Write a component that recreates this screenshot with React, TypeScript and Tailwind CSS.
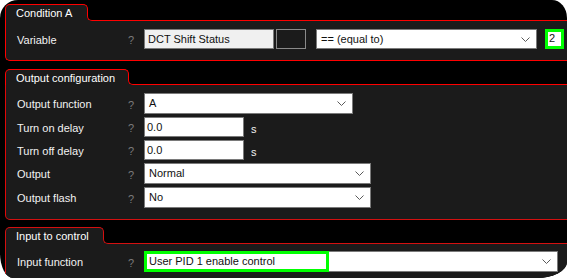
import React from "react";

function Chevron() {
  return (
    <svg width="9" height="5" viewBox="0 0 9 5" className="shrink-0">
      <path d="M0.5 0.5 L4.5 4.5 L8.5 0.5" fill="none" stroke="#5a5a5a" strokeWidth="1" />
    </svg>
  );
}

function Select({ value, w, h = "h-[21px]" }: { value: string; w: string; h?: string }) {
  return (
    <div className={`${w} ${h} shrink-0 bg-white border border-[#7a7a7a] flex items-center justify-between pl-[4px] pr-[6px] text-[11px] text-[#111111]`}>
      <span className="leading-none">{value}</span>
      <Chevron />
    </div>
  );
}

function TextBox({ value, w }: { value: string; w: string }) {
  return (
    <div className={`${w} h-[20px] shrink-0 bg-white border border-[#7a7a7a] flex items-center pl-[2px] text-[11px] text-[#111111]`}>
      <span className="leading-none">{value}</span>
    </div>
  );
}

function Label({ text }: { text: string }) {
  return (
    <>
      <div className="w-[111px] shrink-0 text-[11px] text-[#f2f2f2] leading-none pt-[2px]">{text}</div>
      <div className="w-[16px] shrink-0 text-[11px] text-[#7c7c7c] leading-none pt-[3px]">?</div>
    </>
  );
}

function Tab({ title, w, h, color }: { title: string; w: string; h: string; color: string }) {
  return (
    <div
      className={`relative z-10 ${w} ${h} -mb-px border-t border-l border-r ${color} rounded-t-[5px] bg-[#1b1b1b] flex items-center pl-[10px] pt-[1px] text-[11px] text-white leading-none`}
    >
      <span>{title}</span>
      <div className="absolute bottom-0 right-[-8px] w-[8px] h-[6px] bg-[#1b1b1b]">
        <div className={`w-full h-full bg-black border-l border-b ${color} rounded-bl-[5px]`} />
      </div>
    </div>
  );
}

export default function App() {
  return (
    <div className="w-[567px] h-[278px] bg-white">
      <div
        className="w-[567px] h-[278px] bg-black overflow-hidden pl-[5px] pt-[4px] rounded-tl-[18px] rounded-tr-[15px_18px] rounded-br-[30px_16px] rounded-bl-[13px_25px]"
        style={{ fontFamily: '"Liberation Sans", Arial, sans-serif' }}
      >
        {/* Condition A */}
        <Tab title="Condition A" w="w-[83px]" h="h-[17px]" color="border-[#ff0000]" />
        <div className="h-[41px] border-t border-l border-b border-[#ff0000] rounded-bl-[5px] bg-[#1b1b1b] pl-[11px] pt-[8px]">
          <div className="flex items-center">
            <Label text="Variable" />
            <div className="w-[130px] h-[20px] shrink-0 bg-[#f0f0f0] border border-[#7a7a7a] flex items-center pl-[3px] text-[11px] text-[#111111]">
              <span className="leading-none">DCT Shift Status</span>
            </div>
            <div className="ml-[2px] w-[30px] h-[20px] shrink-0 bg-[#1b1b1b] border border-[#8a8a8a]" />
            <div className="ml-[10px]">
              <Select value="== (equal to)" w="w-[221px]" h="h-[20px]" />
            </div>
            <div className="ml-[8px] -mt-[1px] w-[19px] h-[20px] shrink-0 bg-white border-[3px] border-[#00ff00] flex items-center pl-[1px] text-[11px] text-[#111111]">
              <span className="leading-none">2</span>
            </div>
          </div>
        </div>

        {/* Output configuration */}
        <div className="mt-[8px]">
          <Tab title="Output configuration" w="w-[124px]" h="h-[16px]" color="border-[#ff0000]" />
          <div className="h-[136px] border-t border-l border-b border-t-[#ff0000] border-l-[#e00808] border-b-[#d41010] rounded-bl-[5px] bg-[#1b1b1b] pl-[11px] pt-[8px] flex flex-col gap-[3px]">
            <div className="flex items-center">
              <Label text="Output function" />
              <Select value="A" w="w-[209px]" />
            </div>
            <div className="flex items-center">
              <Label text="Turn on delay" />
              <TextBox value="0.0" w="w-[100px]" />
              <span className="ml-[7px] text-[11px] text-[#f2f2f2] leading-none pt-[4px]">s</span>
            </div>
            <div className="flex items-center">
              <Label text="Turn off delay" />
              <TextBox value="0.0" w="w-[100px]" />
              <span className="ml-[7px] text-[11px] text-[#f2f2f2] leading-none pt-[4px]">s</span>
            </div>
            <div className="flex items-center">
              <Label text="Output" />
              <Select value="Normal" w="w-[227px]" />
            </div>
            <div className="flex items-center">
              <Label text="Output flash" />
              <Select value="No" w="w-[227px]" />
            </div>
          </div>
        </div>

        {/* Input to control */}
        <div className="mt-[7px]">
          <Tab title="Input to control" w="w-[99px]" h="h-[17px]" color="border-[#d41010]" />
          <div className="h-[60px] border-t border-l border-[#d41010] bg-[#1b1b1b] pl-[11px] pt-[7px]">
            <div className="flex items-center">
              <Label text="Input function" />
              <div className="relative">
                <Select value="User PID 1 enable control" w="w-[414px]" />
                <div className="absolute left-0 top-0 w-[185px] h-[21px] border-[3px] border-[#00ff00]" />
              </div>
            </div>
          </div>
        </div>
      </div>
    </div>
  );
}
